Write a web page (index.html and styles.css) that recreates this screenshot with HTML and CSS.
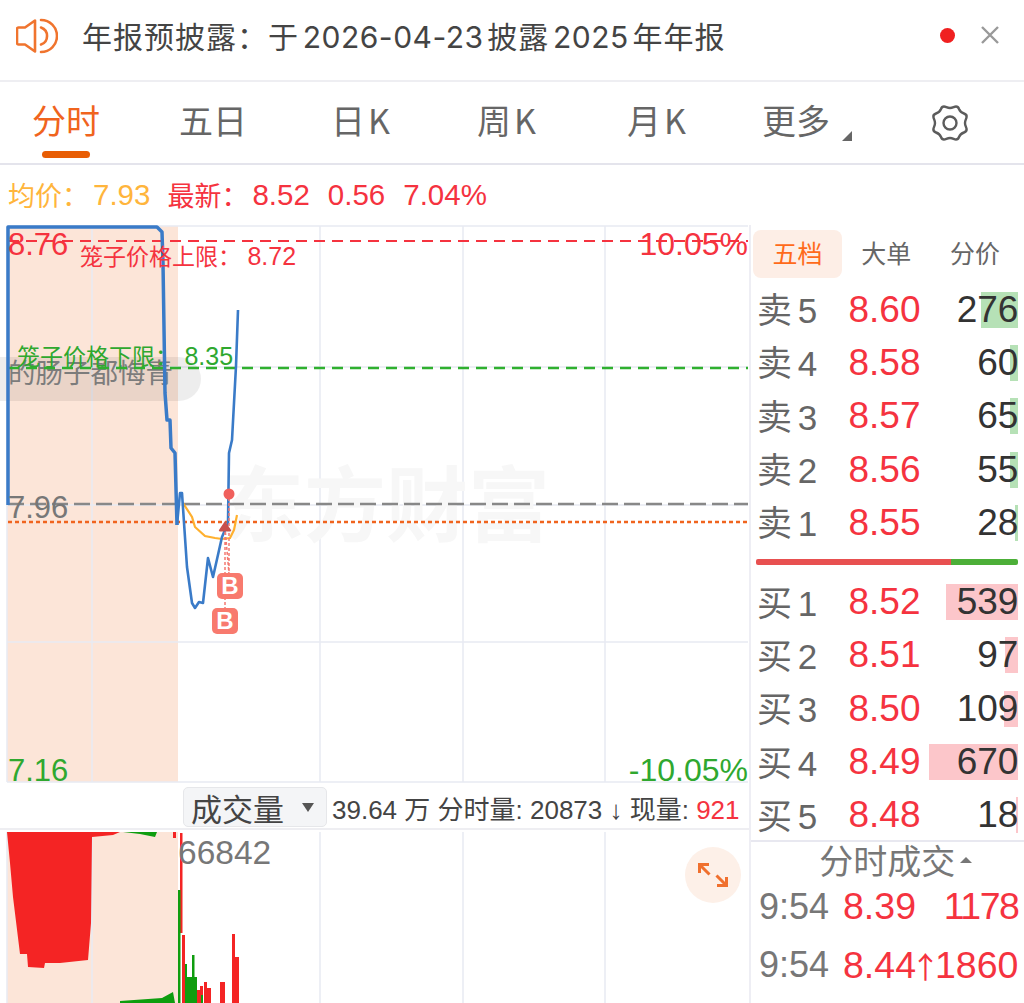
FILE: index.html
```html
<!DOCTYPE html>
<html lang="zh-CN">
<head>
    <meta charset="UTF-8">
    <meta name="viewport" content="width=device-width, initial-scale=1.0">
    <title>分时</title>
    <link rel="stylesheet" href="styles.css">
</head>
<body>
    <div class="notice">
        <svg class="notice-icon" width="42" height="36" viewBox="0 0 42 36" fill="none" stroke="#f0742e" stroke-width="2.600" stroke-linejoin="round" stroke-linecap="round">
            <path d="M2.500 9.500h6.500L19 2.500v31l-10-7H2.500a1.500 1.500 0 0 1-1.500-1.500V11a1.500 1.500 0 0 1 1.500-1.500z"/>
            <path d="M25 9.500a9 9 0 0 1 0 17"/>
            <path d="M25 2a16 16 0 0 1 0 32"/>
        </svg>
        <div class="notice-text">年报预披露：于 <span class="num">2026-04-23</span> 披露 <span class="num">2025</span> 年年报</div>
        <span class="notice-dot"></span>
        <svg class="notice-close" width="20" height="20" viewBox="0 0 20 20" stroke="#999" stroke-width="2.400"><path d="M2 2l16 16M18 2L2 18"/></svg>
    </div>

    <div class="tabs">
        <div class="tab active">分时</div>
        <div class="tab">五日</div>
        <div class="tab k">日K</div>
        <div class="tab k">周K</div>
        <div class="tab k month">月K</div>
        <div class="tab more">更多<i class="corner"></i></div>
        <svg class="gear" width="40" height="38" viewBox="0 0 40 38" fill="none" stroke="#5c5c5c" stroke-width="2.400">
            <path d="M14 2.500c2 0 3 1.500 6 1.500s4-1.500 6-1.500c1.500 0 2.500 1 3 2.500 1 2.500 2 3.500 5 4.500 1.500.5 3 2 2.500 4-.5 2-1.500 3-1.500 5.500s1 3.500 1.500 5.500c.5 2-1 3.500-2.500 4-3 1-4 2-5 4.500-.5 1.500-1.500 2.500-3 2.500-2 0-3-1.500-6-1.500s-4 1.500-6 1.500c-1.500 0-2.500-1-3-2.500-1-2.500-2-3.500-5-4.500-1.500-.5-3-2-2.500-4 .5-2 1.500-3 1.500-5.500s-1-3.500-1.500-5.500c-.5-2 1-3.500 2.500-4 3-1 4-2 5-4.500.5-1.500 1.500-2.500 3-2.500z"/>
            <circle cx="20" cy="19" r="6.500"/>
        </svg>
    </div>

    <div class="quote">
        <span class="avg">均价：</span><span class="avg gap-l">7.93</span>
        <span class="up m-big">最新：</span><span class="up gap-l">8.52</span>
        <span class="up m-small">0.56</span>
        <span class="up m-small">7.04%</span>
    </div>

    <div class="main">
        <div class="charts">
            <svg class="price-chart" width="749" height="558" viewBox="0 225 749 558">
                <rect x="7" y="226" width="171" height="556" fill="#fce5d8"/>
                <g stroke="#e8eaf2" stroke-width="1.500" fill="none">
                    <path d="M7 226H748M7 367H748M7 505H748M7 642H748M7 782H748"/>
                    <path d="M7 226V782M92 226V782M320 226V782M463 226V782M605 226V782"/>
                </g>
                <text class="watermark" x="222" y="535">东方财富</text>
                <rect x="-30" y="357" width="231" height="44" rx="22" fill="#000" fill-opacity="0.07"/>
                <text class="danmu" x="8" y="383">的肠子都悔青</text>

                <path d="M8 241H748" stroke="#f5333f" stroke-width="2.200" stroke-dasharray="11 7"/>
                <path d="M8 368H748" stroke="#2fb02f" stroke-width="2.400" stroke-dasharray="11 7"/>
                <path d="M8 504H748" stroke="#888" stroke-width="2.400" stroke-dasharray="16 6"/>
                <path d="M8 522H748" stroke="#f0641e" stroke-width="2.400" stroke-dasharray="4 3"/>

                <polyline fill="none" stroke="#ffb02e" stroke-width="2.200" points="183,503 192,517 195,527 205,536 215,538 222,539 230,538 234,530 237,515"/>
                <polyline fill="none" stroke="#3a7bc8" stroke-width="3.500" stroke-linejoin="round" points="8,505 8,227 157,227 162,232 163,263 165,393 167,420 170,420 171,448 175,453 177,525"/>
                <polyline fill="none" stroke="#3a7bc8" stroke-width="2.600" stroke-linejoin="round" points="177,525 180,493 182,493 187,567 192,603 195,608 199,602 203,603 208,558 213,577 222,537 228,523 229,453 232,440 236,366 238,310"/>

                <path d="M229 493V586M225 527L230 586M225 527V620" stroke="#f47a72" stroke-width="1.500" stroke-dasharray="3 2" fill="none"/>
                <circle cx="229" cy="494" r="5.500" fill="#f0605c"/>
                <path d="M225 521l6 9a1 1 0 0 1-1 1.500h-10a1 1 0 0 1-1-1.500z" fill="#c8504c"/>
                <rect x="217" y="573" width="26" height="26" rx="5" fill="#f87a6e"/>
                <text class="mark" x="230" y="594">B</text>
                <rect x="212" y="608" width="26" height="26" rx="5" fill="#f87a6e"/>
                <text class="mark" x="225" y="629">B</text>

                <text class="axis red" x="8" y="255">8.76</text>
                <text class="axis gray" x="8" y="518">7.96</text>
                <text class="axis green" x="8" y="781">7.16</text>
                <text class="axis-end red" x="748" y="255">10.05%</text>
                <text class="axis-end green" x="748" y="781">-10.05%</text>
                <text class="limit red" x="80" y="265">笼子价格上限： <tspan class="limit-num">8.72</tspan></text>
                <text class="limit green" x="17" y="365">笼子价格下限： <tspan class="limit-num">8.35</tspan></text>
            </svg>

            <div class="vol-bar">
                <div class="vol-select">成交量<i class="down"></i></div>
                <div class="vol-info">39.64 万 分时量: 20873 ↓ 现量: <span class="up">921</span></div>
            </div>

            <svg class="vol-chart" width="749" height="173" viewBox="0 830 749 173">
                <rect x="7" y="832" width="171" height="171" fill="#fce5d8"/>
                <path d="M7 832V1003M92 832V1003M320 832V1003M463 832V1003M605 832V1003" stroke="#e8eaf2" stroke-width="1.500"/>
                <polygon fill="#f42424" points="7,832 120,832 113,835 92,837 91,923 88,960 60,963 45,963 44,968 28,967 27,954 20,954 13,897 10,863"/>
                <polygon fill="#0f9d0f" points="123,832 157,832 155,837 140,834"/>
                <polygon fill="#0f9d0f" points="120,1001 162,998 173,992 175,1003 120,1003"/>
                <g fill="#f42424">
                    <rect x="173" y="832" width="3" height="6"/>
                    <rect x="180" y="833" width="2.500" height="100"/>
                    <rect x="182" y="935" width="3" height="68"/>
                    <rect x="197" y="990" width="3" height="13"/>
                    <rect x="200" y="986" width="3" height="17"/>
                    <rect x="204" y="982" width="3" height="21"/>
                    <rect x="207" y="988" width="4" height="15"/>
                    <rect x="220" y="982" width="5" height="21"/>
                    <rect x="232" y="934" width="3" height="69"/>
                    <rect x="235" y="957" width="4" height="46"/>
                </g>
                <g fill="#0f9d0f">
                    <rect x="178" y="890" width="2.500" height="113"/>
                    <rect x="185" y="964" width="2" height="39"/>
                    <rect x="187" y="977" width="5" height="26"/>
                    <rect x="192" y="955" width="2.500" height="48"/>
                    <rect x="194" y="977" width="3" height="26"/>
                    <rect x="201" y="995" width="2" height="8"/>
                </g>
                <text class="peak" x="178" y="864">66842</text>
            </svg>

            <button class="zoom-btn">
                <svg width="30" height="30" viewBox="0 0 30 30" fill="none" stroke="#f0702e" stroke-width="3">
                    <path d="M1.500 13V4.500H11M1.500 4.500l10 10M28.500 17v8.500H19M28.500 25.500l-10-10"/>
                </svg>
            </button>
        </div>

        <div class="side">
            <div class="side-tabs">
                <div class="side-tab active">五档</div>
                <div class="side-tab">大单</div>
                <div class="side-tab">分价</div>
            </div>
            <div class="book sell">
                <div class="row"><span class="lbl">卖 5</span><span class="price">8.60</span><span class="qty">276<i class="bar" style="width:37px"></i></span></div>
                <div class="row"><span class="lbl">卖 4</span><span class="price">8.58</span><span class="qty">60<i class="bar" style="width:8px"></i></span></div>
                <div class="row"><span class="lbl">卖 3</span><span class="price">8.57</span><span class="qty">65<i class="bar" style="width:8px"></i></span></div>
                <div class="row"><span class="lbl">卖 2</span><span class="price">8.56</span><span class="qty">55<i class="bar" style="width:8px"></i></span></div>
                <div class="row"><span class="lbl">卖 1</span><span class="price">8.55</span><span class="qty">28<i class="bar" style="width:3px"></i></span></div>
            </div>
            <div class="ratio"><span class="ratio-up"></span><span class="ratio-down"></span></div>
            <div class="book buy">
                <div class="row"><span class="lbl">买 1</span><span class="price">8.52</span><span class="qty">539<i class="bar" style="width:72px"></i></span></div>
                <div class="row"><span class="lbl">买 2</span><span class="price">8.51</span><span class="qty">97<i class="bar" style="width:13px"></i></span></div>
                <div class="row"><span class="lbl">买 3</span><span class="price">8.50</span><span class="qty">109<i class="bar" style="width:14px"></i></span></div>
                <div class="row"><span class="lbl">买 4</span><span class="price">8.49</span><span class="qty">670<i class="bar" style="width:89px"></i></span></div>
                <div class="row"><span class="lbl">买 5</span><span class="price">8.48</span><span class="qty">18<i class="bar" style="width:2px"></i></span></div>
            </div>
            <div class="trades">
                <div class="trades-title">分时成交<i class="up-arrow"></i></div>
                <div class="trade"><span class="time">9:54</span><span class="up">8.39</span><span class="up trade-qty">1178</span></div>
                <div class="trade"><span class="time">9:54</span><span class="up">8.44<span class="arrow">↑</span>1860</span></div>
            </div>
        </div>
    </div>
</body>
</html>
```

FILE: styles.css
```css
* {
    box-sizing: border-box;
}
body {
    margin: 0;
    width: 1024px;
    height: 1003px;
    overflow: hidden;
    background: #fff;
    font-family: "Liberation Sans", "Noto Sans CJK SC", sans-serif;
    color: #333;
}
i {
    display: block;
}
.up {
    color: #f5333f;
}

/* notice */
.notice {
    height: 82px;
    padding: 0 24px 10px 16px;
    display: flex;
    align-items: center;
    border-bottom: 2px solid #eeeef2;
}
.notice-icon {
    flex: none;
    margin-top: 2px;
}
.notice-text {
    margin-left: 24px;
    font-size: 30px;
    letter-spacing: 1px;
    color: #444;
    font-family: "Noto Sans CJK SC", sans-serif;
    word-spacing: -4px;
    white-space: nowrap;
}
.notice-text .num {
    font-family: Inter, sans-serif;
    letter-spacing: 0.5px;
}
.notice-dot {
    width: 15px;
    height: 15px;
    margin-left: auto;
    border-radius: 50%;
    background: #f02020;
}
.notice-close {
    margin-left: 25px;
}

/* tabs */
.tabs {
    height: 83px;
    padding: 0 54px 0 32px;
    display: flex;
    align-items: center;
    gap: 84px;
    border-bottom: 2px solid #e4e4ec;
    font-family: "Noto Sans CJK SC", sans-serif;
    font-size: 34px;
    color: #666;
}
.tab {
    position: relative;
    line-height: 74px;
    padding-bottom: 6px;
    white-space: nowrap;
}
.tab.active {
    color: #f0641e;
    margin-right: -5px;
}
.tab.active::after {
    content: "";
    position: absolute;
    left: 10px;
    right: 10px;
    bottom: 5px;
    height: 7px;
    border-radius: 4px;
    background: #e85d04;
}
.tab.k {
    letter-spacing: 3px;
}
.tab.month {
    margin-left: 4px;
}
.tab.more {
    margin-left: -11px;
}
.corner {
    position: absolute;
    left: 80px;
    top: 48px;
    width: 0;
    height: 0;
    border-left: 10px solid transparent;
    border-bottom: 10px solid #666;
}
.gear {
    margin-left: auto;
}

/* quote line */
.quote {
    height: 60px;
    padding: 0 0 1px 8px;
    display: flex;
    align-items: center;
    font-size: 27px;
    white-space: nowrap;
}
.avg {
    color: #ffb53c;
}
.gap-l {
    margin-left: 4px;
    font-size: 29.500px;
}
.m-big {
    margin-left: 17px;
}
.m-small {
    margin-left: 18px;
    font-size: 29.500px;
}

/* main area */
.main {
    display: flex;
    height: 778px;
}
.charts {
    position: relative;
    width: 749px;
    flex: none;
}
.price-chart,
.vol-chart {
    display: block;
    overflow: visible;
}
.price-chart text,
.vol-chart text {
    font-family: "Liberation Sans", "Noto Sans CJK SC", sans-serif;
}
.watermark {
    font-size: 82px;
    font-weight: 700;
    fill: #f7f7f7;
}
.danmu {
    font-size: 27.500px;
    fill: #7c7c7c;
}
.axis {
    font-size: 31px;
}
.axis-end {
    font-size: 32px;
    text-anchor: end;
}
.red {
    fill: #f5333f;
}
.green {
    fill: #2fa82f;
}
.gray {
    fill: #777;
}
.limit {
    font-size: 23px;
}
.limit-num {
    font-size: 25px;
}
.mark {
    font-size: 24px;
    font-weight: 700;
    fill: #fff;
    text-anchor: middle;
}
.peak {
    font-size: 33.500px;
    fill: #777;
}

/* volume header */
.vol-bar {
    height: 47px;
    padding: 3px 8px 0 183px;
    display: flex;
    align-items: center;
    border-bottom: 2px solid #eeeef2;
}
.vol-select {
    width: 144px;
    height: 40px;
    padding-left: 7px;
    display: flex;
    align-items: center;
    background: #f4f5f7;
    border: 1px solid #e6e7ea;
    border-radius: 5px;
    font-size: 31px;
    color: #444;
    position: relative;
}
.down {
    position: absolute;
    right: 12px;
    top: 15px;
    border-left: 6px solid transparent;
    border-right: 6px solid transparent;
    border-top: 9px solid #555;
}
.vol-info {
    margin-left: 5px;
    font-size: 26px;
    color: #444;
    white-space: nowrap;
}
.zoom-btn {
    position: absolute;
    left: 685px;
    top: 622px;
    width: 56px;
    height: 56px;
    padding: 0;
    border: none;
    border-radius: 50%;
    background: #fdf0e8;
    display: flex;
    align-items: center;
    justify-content: center;
}

/* order book */
.side {
    flex: 1;
    border-left: 2px solid #eeeef4;
}
.side-tabs {
    display: flex;
    height: 58px;
    padding: 5px 6px 5px 2px;
    font-size: 25px;
    color: #666;
}
.side-tab {
    flex: 1;
    padding-bottom: 4px;
    display: flex;
    align-items: center;
    justify-content: center;
}
.side-tab.active {
    flex: none;
    width: 89px;
    border-radius: 8px;
    background: #fdeee6;
    color: #ff6a1a;
}
.book {
    padding: 0 7px 0 6px;
}
.row {
    height: 53.300px;
    display: flex;
    align-items: center;
}
.lbl {
    width: 90px;
    margin-top: -4px;
    font-size: 35px;
    color: #666;
    white-space: nowrap;
    word-spacing: -4px;
}
.price {
    width: 75px;
    font-size: 37px;
    color: #f5333f;
    text-align: center;
}
.qty {
    flex: 1;
    position: relative;
    z-index: 0;
    font-size: 37px;
    text-align: right;
    color: #333;
}
.bar {
    position: absolute;
    z-index: -1;
    right: 0;
    top: 3px;
    height: 36px;
}
.sell .bar {
    background: #2fa82f;
    opacity: 0.35;
}
.buy .bar {
    background: #f5333f;
    opacity: 0.28;
}
.ratio {
    margin: 10px 7px 10px 5px;
    height: 6px;
    display: flex;
}
.ratio-up {
    width: 195px;
    background: #e85050;
    border-radius: 2px 0 0 2px;
}
.ratio-down {
    flex: 1;
    background: #4caf38;
    border-radius: 0 2px 2px 0;
}

/* trades */
.trades {
    border-top: 2px solid #e8e8f0;
    margin-top: -2px;
    padding: 0 7px 0 8px;
}
.trades-title {
    height: 36px;
    padding-left: 14px;
    display: flex;
    align-items: center;
    justify-content: center;
    gap: 5px;
    font-size: 34px;
    color: #777;
}
.up-arrow {
    border-left: 6px solid transparent;
    border-right: 6px solid transparent;
    border-bottom: 6px solid #777;
}
.trade {
    height: 58px;
    display: flex;
    align-items: center;
    font-size: 37.500px;
    white-space: nowrap;
}
.time {
    flex: none;
    width: 84px;
    font-size: 36px;
    color: #777;
}
.trade-qty {
    margin-left: auto;
    letter-spacing: -1.500px;
}
.arrow {
    display: inline-flex;
    justify-content: center;
    width: 19px;
    font-family: "Noto Sans CJK SC", sans-serif;
    font-size: 30px;
}
```
